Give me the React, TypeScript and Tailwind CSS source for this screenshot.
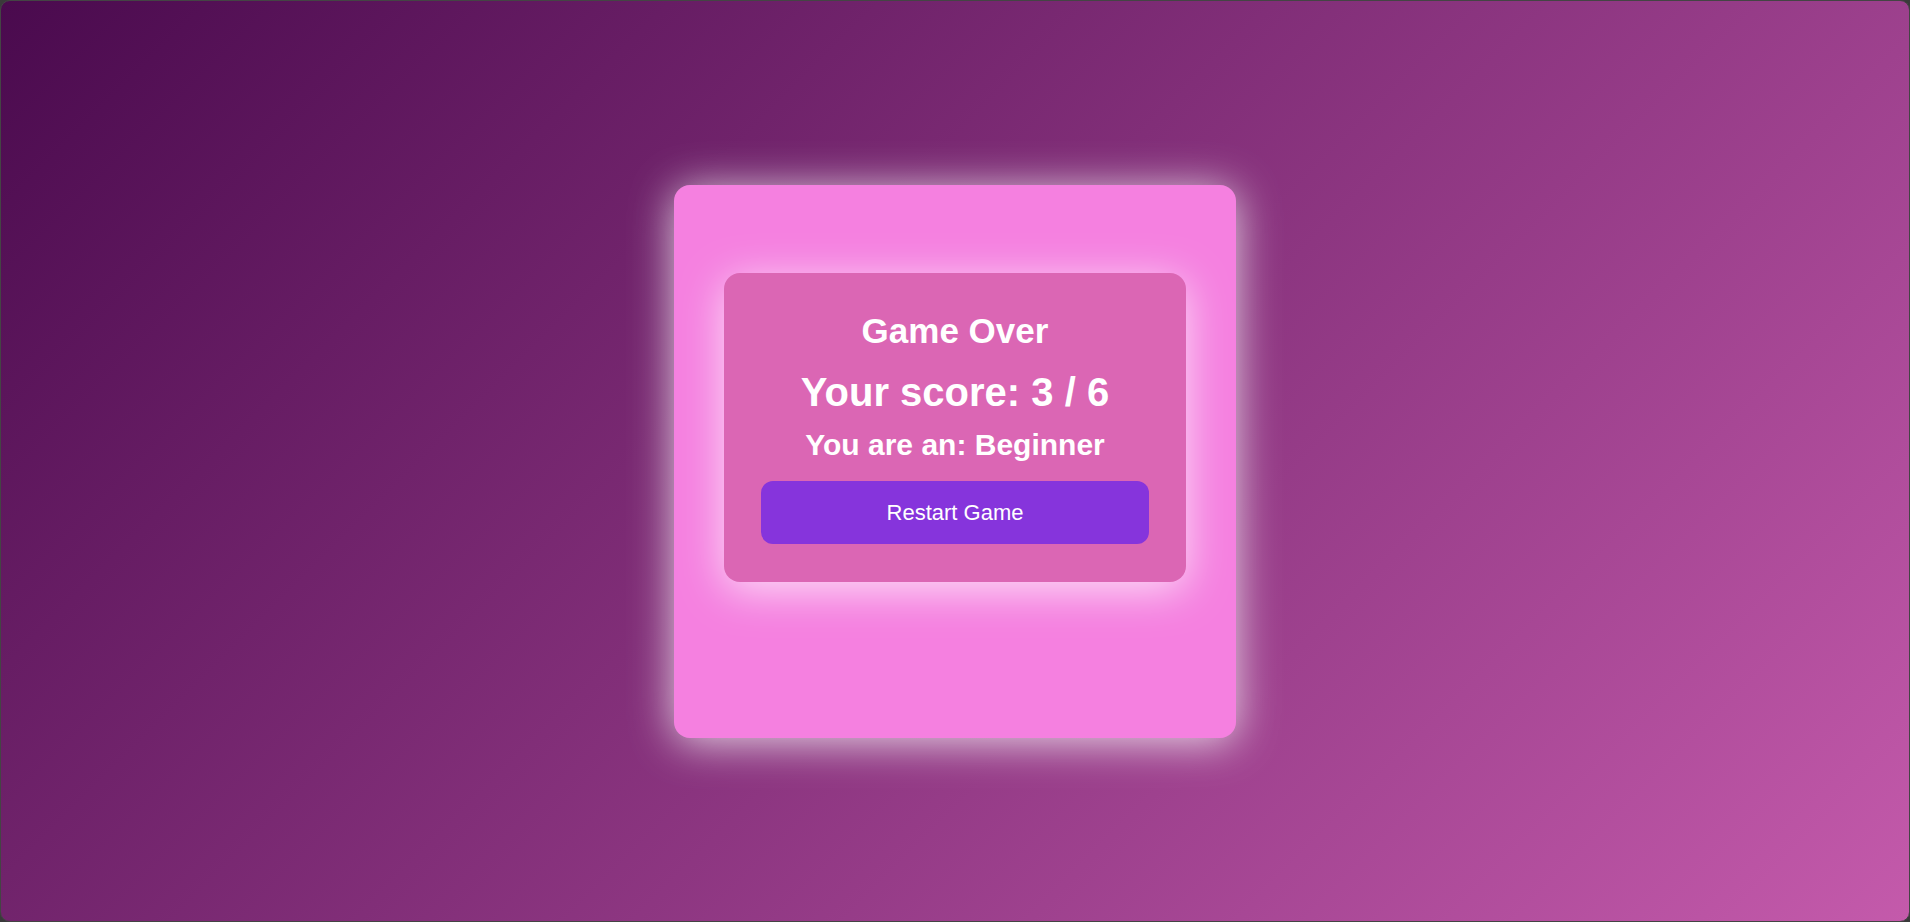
const App = () => {
  return (
    <div className="w-[1910px] h-[922px] bg-[#3a3a3a]" style={{ fontFamily: '"Liberation Sans", Arial, sans-serif' }}>
      <div className="w-full h-full rounded-[10px] border border-[#444] bg-[linear-gradient(135deg,#4a0a4e,#c45aab)] flex items-center justify-center">
        <div className="w-[562px] h-[553px] rounded-[16px] bg-[#f580e0] shadow-[0_4px_44px_rgba(255,255,255,0.8)] flex flex-col items-center pt-[88px]">
          <div className="w-[462px] rounded-[16px] bg-[#db66b4] shadow-[0_8px_44px_rgba(255,255,255,0.75)] px-[37px] pt-[38px] pb-[38px] flex flex-col items-center text-white">
            <h2 className="text-[35px] leading-[40px] font-bold">Game Over</h2>
            <h1 className="mt-[18px] text-[40px] leading-[46px] font-bold">Your score: 3 / 6</h1>
            <h3 className="mt-[12px] text-[30px] leading-[36px] font-bold">You are an: Beginner</h3>
            <button className="mt-[18px] w-full h-[63px] rounded-[12px] bg-[#8634dc] text-[22px] text-white">
              Restart Game
            </button>
          </div>
        </div>
      </div>
    </div>
  );
};

export default App;
